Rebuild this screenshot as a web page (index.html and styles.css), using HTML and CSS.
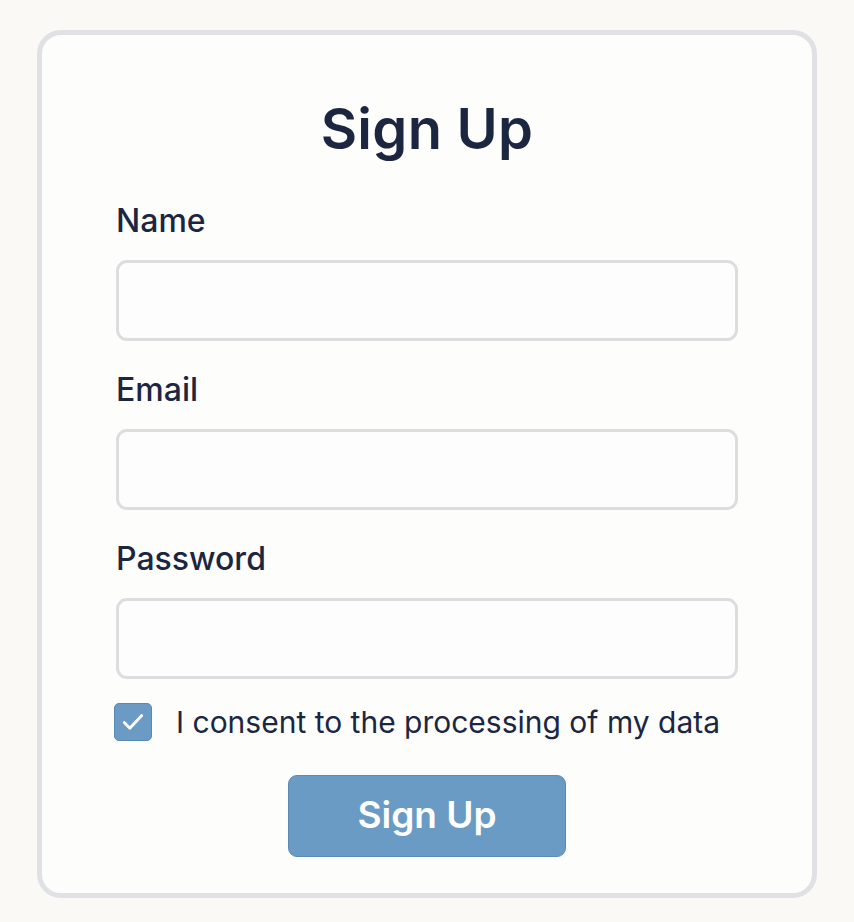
FILE: index.html
```html
<!DOCTYPE html>
<html lang="en">
<head>
<meta charset="utf-8">
<title>Sign Up</title>
<link rel="stylesheet" href="styles.css">
</head>
<body>
<div class="card">
  <h1 class="title">Sign Up</h1>
  <form class="form">
    <div class="field">
      <label class="label" for="name">Name</label>
      <input class="input" id="name" type="text">
    </div>
    <div class="field">
      <label class="label" for="email">Email</label>
      <input class="input" id="email" type="email">
    </div>
    <div class="field">
      <label class="label" for="password">Password</label>
      <input class="input" id="password" type="password">
    </div>
    <label class="consent">
      <span class="checkbox">
        <svg width="28" height="28" viewBox="0 0 24 24" fill="none"><path d="M4.5 12.5l4.8 4.8L19.5 6.5" stroke="#fff" stroke-width="2.4" stroke-linecap="round" stroke-linejoin="round"/></svg>
      </span>
      <span class="consent-text">I consent to the processing of my data</span>
    </label>
    <div class="actions">
      <button class="button" type="button">Sign Up</button>
    </div>
  </form>
</div>
</body>
</html>
```
FILE: styles.css
```css
* { box-sizing: border-box; }
html, body { margin: 0; padding: 0; }
body {
  background: #faf9f6;
  font-family: Inter, "Noto Sans", sans-serif;
  color: #1c2640;
  padding: 30px 37px 0 37px;
}
.card {
  width: 780px;
  height: 868px;
  background: #fdfdfc;
  border: 5px solid #dfe1e4;
  border-radius: 24px;
  padding: 62px 74px 0 74px;
}
.title {
  margin: 0;
  font-size: 56px;
  line-height: 64px;
  font-weight: 600;
  text-align: center;
  color: #1c2640;
  letter-spacing: 0.3px;
}
.form {
  display: flex;
  flex-direction: column;
  margin-top: 41px;
}
.field {
  display: flex;
  flex-direction: column;
  gap: 21px;
  margin-bottom: 30px;
}
.label {
  font-size: 32px;
  line-height: 37px;
  font-weight: 500;
  color: #1c2640;
}
.input {
  width: 100%;
  height: 81px;
  border: 3px solid #dcdddf;
  border-radius: 11px;
  background: #fdfdfd;
  font: inherit;
}
.consent {
  display: flex;
  align-items: center;
  gap: 24px;
  margin-top: -6px;
  margin-left: -2px;
}
.checkbox {
  width: 38px;
  height: 38px;
  border-radius: 5px;
  background: #6b9bc4;
  border: 1.5px solid #5a89b5;
  display: flex;
  align-items: center;
  justify-content: center;
}
.consent-text {
  font-size: 30px;
  line-height: 37px;
  color: #1c2640;
}
.actions {
  display: flex;
  justify-content: center;
  margin-top: 34px;
}
.button {
  width: 278px;
  height: 82px;
  background: #6a9bc4;
  border: 1.5px solid #5b8ab6;
  border-radius: 9px;
  color: #fff;
  font-family: Inter, "Noto Sans", sans-serif;
  font-size: 37px;
  font-weight: 600;
  padding: 0 0 4px 0;
}
```
